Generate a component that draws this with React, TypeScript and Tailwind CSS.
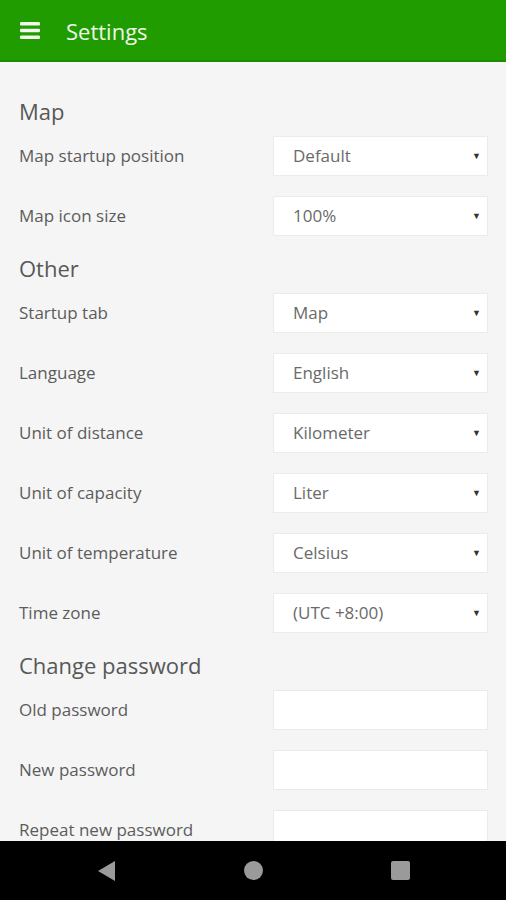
import React from "react";

const font = { fontFamily: '"Open Sans", "Noto Sans", sans-serif' };

function SelectRow({ label, value }: { label: string; value: string }) {
  return (
    <div className="flex h-[60px] items-center justify-between">
      <span className="text-[17px] text-[#5c5c5c]">{label}</span>
      <div className="flex h-[40px] w-[215px] items-center justify-between border border-[#ebebeb] bg-white pl-[19px] pr-[6px] text-[17px] text-[#6a6a6a]">
        <span>{value}</span>
        <span className="text-[9px] text-[#333]">▼</span>
      </div>
    </div>
  );
}

function InputRow({ label }: { label: string }) {
  return (
    <div className="flex h-[60px] items-center justify-between">
      <span className="text-[17px] text-[#5c5c5c]">{label}</span>
      <div className="h-[40px] w-[215px] border border-[#ebebeb] bg-white" />
    </div>
  );
}

function Heading({ children }: { children: React.ReactNode }) {
  return (
    <h2 className="flex h-[37px] items-end pb-[1px] text-[22px] leading-[28px] text-[#585858]">
      {children}
    </h2>
  );
}

export default function App() {
  return (
    <div className="flex h-screen flex-col overflow-hidden bg-[#f5f5f5]" style={font}>
      <header className="flex h-[62px] shrink-0 items-center border-b-2 border-[#1b8c00] bg-[#209c00] px-[20px]">
        <svg width="20" height="17" viewBox="0 0 20 17" className="mr-[26px]">
          <rect x="0" y="0" width="20" height="3.6" rx="1.2" fill="#f1f8ee" />
          <rect x="0" y="6.7" width="20" height="3.6" rx="1.2" fill="#f1f8ee" />
          <rect x="0" y="13.4" width="20" height="3.6" rx="1.2" fill="#f1f8ee" />
        </svg>
        <span className="pt-[3px] text-[22px] text-[#eef7ea]">Settings</span>
      </header>

      <main className="flex-1 overflow-hidden px-[19px] pt-[27px] pr-[18px]">
        <Heading>Map</Heading>
        <SelectRow label="Map startup position" value="Default" />
        <SelectRow label="Map icon size" value="100%" />
        <Heading>Other</Heading>
        <SelectRow label="Startup tab" value="Map" />
        <SelectRow label="Language" value="English" />
        <SelectRow label="Unit of distance" value="Kilometer" />
        <SelectRow label="Unit of capacity" value="Liter" />
        <SelectRow label="Unit of temperature" value="Celsius" />
        <SelectRow label="Time zone" value="(UTC +8:00)" />
        <Heading>Change password</Heading>
        <InputRow label="Old password" />
        <InputRow label="New password" />
        <InputRow label="Repeat new password" />
      </main>

      <nav className="flex h-[59px] shrink-0 items-center justify-center gap-[128px] bg-black">
        <svg width="19" height="22" viewBox="0 0 19 22">
          <path d="M18 1 L1 11 L18 21 Z" fill="#9a9a9a" />
        </svg>
        <div className="h-[19px] w-[19px] rounded-full bg-[#9a9a9a]" />
        <div className="h-[19px] w-[19px] rounded-[2px] bg-[#9a9a9a]" />
      </nav>
    </div>
  );
}
